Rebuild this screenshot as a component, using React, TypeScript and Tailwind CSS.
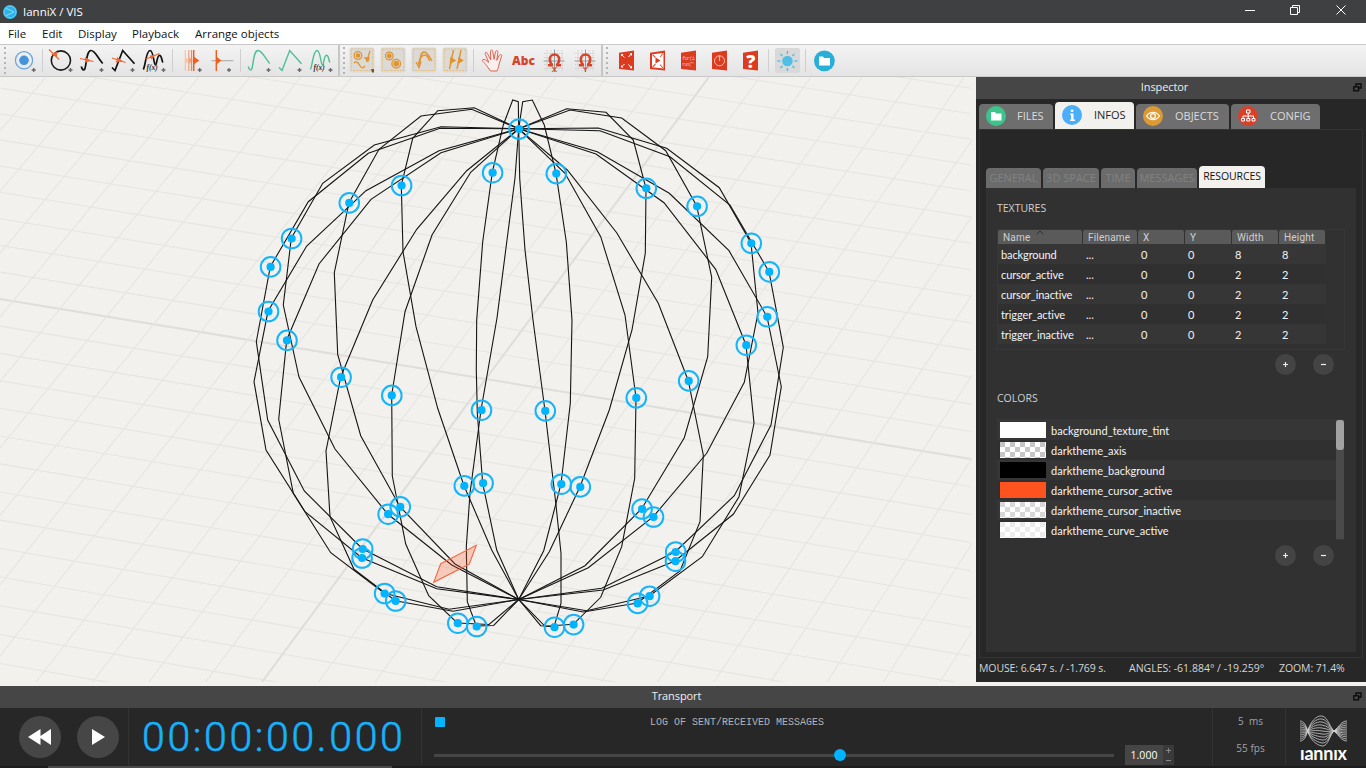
import type { ReactNode } from "react";

const UI = "font-['Open_Sans','Noto_Sans',sans-serif]";
const PANEL = "font-['Lato','Open_Sans',sans-serif]";

/* ---------- scene ---------- */

const TOP = "518.7,128.8";
const BOTTOM = "518.7,599.5";

const meridians: string[] = [
  "518.3,101.7 512.7,100 503.3,125 492.3,172.3 482.7,241.7 476.7,320 476.3,370 477.3,413 482.7,483.3 496.7,550",
  "515,178 507,240 497,318 481,410 470,493.3 466.3,546.7 467.3,601.7 476.3,626 493.7,625.5",
  "474.3,107.7 437.7,110.7 412.7,138.3 401.3,185.3 403,251.7 416,326.7 437.7,408.3 464,485.7 491.7,550",
  "471.7,109.3 421,116 379,149.3 349,202.7 334.3,272.7 337.7,354.3 360.7,435.7 400,506.7 455,564",
  "441,126.7 374.3,145 322.7,183.3 291.3,238.3 283.3,305 299,377 335,449 387.7,514 451.7,565",
  "440,128.3 368.3,153.3 308.3,201.7 270.3,266.7 256.3,341.7 267.7,420 304.3,491 362.3,548.7 436.7,586.7",
  "439,150.7 366,190.7 306.7,246 268,311.3 254,381.7 266,450 305,511.7 361.7,557.7 436.7,588.7",
  "441,152.7 371,199.3 319,264 286.7,340 278.7,419.3 293.3,493.3 330.7,552.7 384.3,593.3 449,609.3",
  "466.7,170.7 416.7,229.3 372.7,300 340.7,377 326,451 330,516.7 354,569.3 395.3,600.7 453,611.3",
  "470.7,172.3 432,235 405,311.7 391.7,395 392.3,476 405.7,544 428.7,595.7 457.3,623 489,624.5",
  "522.7,101.7 532.3,100 544.3,125 556,173.3 566.3,241.7 572,320 570.3,403.3 561,484 543.7,550.7",
  "519.7,178.3 525,250 533,320 545,410.7 556,505 561,553.3 561,603.3 554,626.7 540.7,625.7",
  "566.7,108.7 606,112.3 633.3,140 646,188.3 645.3,253.3 632,330 609.3,410 580,486.7 549.3,551.7",
  "570,110 621.7,118 665.7,150.7 696.7,206 711.7,277.3 707.7,356.7 684.3,437.7 641.7,508.7 585,565.7",
  "598.3,128 666.7,148.3 719.3,187.7 751,243 758,313 744.3,382.3 706.7,453.3 653.3,516.7 588.3,567.7",
  "600,130.7 670,156.7 730,205 769,271.7 783.3,347.3 771,425 734.3,495.7 675.3,551.7 601.7,588.3",
  "597.3,151.7 669.3,193.3 729,250.7 767,316.7 781.3,386.7 770,455 733.3,514.3 675,561 603.3,590",
  "596,154 664,202.7 715.7,269.3 746,345 754,423.3 739,496.7 702.3,556.7 649.3,596 586.7,610.7",
  "567.3,170 616.7,232.7 658.3,303.3 688.3,380.7 703.3,455 700,521.7 680,571 637.3,603 583.3,612",
  "565,173.3 600.7,236.7 625,315 636,397.7 634.7,478.3 621.7,546.7 600.7,597.3 573.3,624.3 545,626.3",
];

const triggers: [number, number][] = [
  [518.7, 128.8], [492.3, 172.5], [401.3, 185.3], [349, 202.7], [291.3, 238.3], [270.3, 266.7],
  [268.2, 311.3], [286.7, 340.2], [340.8, 377], [391.5, 395.2], [481.2, 410], [464, 485.7], [482.8, 483],
  [387.8, 514], [400, 506.7], [362.4, 548.8], [361.8, 557.8], [384.3, 593.3], [395.4, 600.8],
  [457.5, 623], [476.4, 626.3], [556, 173.4], [646, 188.1], [696.8, 206.1], [751, 243.1], [769, 271.7],
  [767, 316.6], [746, 345], [688.4, 380.7], [636, 397.7], [545, 410.7], [561, 484], [580, 486.7],
  [641.8, 508.8], [653.2, 516.8], [675.4, 551.8], [675.2, 561], [649.3, 596], [637.3, 603.2],
  [554.2, 627], [573.3, 624.4],
];

function Scene() {
  const rows: ReactNode[] = [];
  for (let k = -16; k <= 16; k++) {
    const left = 299 + 27 * k + 0.08 * k * k;
    const right = left + 160 + 0.6 * k;
    rows.push(
      <line key={k} x1={0} y1={left} x2={971} y2={right} stroke={k === 0 ? "#dfdeda" : "#e6e5e1"} strokeWidth={k === 0 ? 2.1 : 1.1} />
    );
  }
  const cols: ReactNode[] = [];
  for (let k = -16; k <= 14; k++) {
    cols.push(
      <line key={k} x1={709 + 51 * k} y1={77} x2={262 + 56.5 * k} y2={682} stroke={k === 0 ? "#dfdeda" : "#e6e5e1"} strokeWidth={k === 0 ? 2.1 : 1.1} />
    );
  }
  return (
    <svg width="972" height="605" viewBox="0 77 972 605" className="block shrink-0 bg-[#f2f1ed]">
      {rows}
      {cols}
      <g fill="none" stroke="#151515" strokeWidth="1.1">
        {meridians.map((m) => (
          <polyline key={m} points={`${TOP} ${m} ${BOTTOM}`} />
        ))}
      </g>
      <polygon points="476.3,545.3 469.3,564 433.7,582.3 440.7,563.7" fill="#ff5722" fillOpacity=".25" stroke="#f36a44" strokeWidth="1.1" />
      {triggers.map(([x, y]) => (
        <g key={`${x}-${y}`}>
          <circle cx={x + 0.3} cy={y + 0.2} r="9.8" fill="none" stroke="#16b4fa" strokeWidth="2" />
          <circle cx={x + 0.3} cy={y + 0.2} r="4.1" fill="#00b4ff" />
        </g>
      ))}
    </svg>
  );
}

/* ---------- toolbar ---------- */

function Slot({ children }: { children: ReactNode }) {
  return (
    <svg width="31" height="31" viewBox="0 1 31 31" className="block shrink-0">
      {children}
    </svg>
  );
}

const Plus = ({ x = 25.5 }: { x?: number }) => (
  <path d={`M${x - 2} 26h4M${x} 24v4`} stroke="#666" strokeWidth="1.3" />
);

const Fx = () => (
  <text x="8.5" y="26" fontSize="7.5" fontStyle="italic" fontWeight="bold" fill="#333" fontFamily="Liberation Serif, serif">
    f(x)
  </text>
);

function Divider({ className }: { className: string }) {
  return (
    <div className={`flex h-full shrink-0 justify-center py-1 ${className}`}>
      <div className="w-px bg-[#cfcfcf]" />
    </div>
  );
}

function Handle({ className }: { className: string }) {
  return (
    <div className={`flex shrink-0 flex-col items-center justify-center gap-[3px] ${className}`}>
      {[0, 1, 2, 3, 4, 5].map((i) => (
        <div key={i} className="h-[2px] w-[2px] bg-[#b4b4b4]" />
      ))}
    </div>
  );
}

const CURVE = "M5.3 22.5C6 25.5 7.5 26.5 8.5 25.5C10.5 23 10 6.500 15 6.500C19 6.500 20.500 12 26.700 19.500";
const ZIG = "M5 23.500L8 26.500L15.700 6.500L27.500 19.700";
const FUNC = "M5.300 25.500C7.500 22 8 6.500 12 6.500C15.800 6.500 15.500 21 17.500 21C19 21 18.800 11.300 21.500 11.300C24 11.300 23.500 17 25 18.500";

const Toggle = () => (
  <>
    <rect x="2.500" y="3.500" width="25" height="25" rx="2" fill="#dcdad6" />
    <rect x="4.300" y="5" width="21.500" height="21.500" fill="none" stroke="#e6bb78" strokeWidth=".9" strokeDasharray="2 1.200" />
  </>
);

const Magnet = ({ letter }: { letter: string }) => (
  <>
    <path d="M6 9.500h20M6 13.500h20M6 20.500h20M6 24.500h20M9 6v21M13 6v21M20 6v21M24 6v21" stroke="#c6c6c6" strokeWidth=".8" strokeDasharray="1.500 1" />
    <path d="M5.500 17h21M16.500 5.500V28" stroke="#8e8e8e" strokeWidth=".9" />
    <path d="M10 21.300h3.800v-1C12 18.500 11.800 17 11.800 15.200a4.700 4.700 0 0 1 9.400 0C21.200 17 21 18.500 19.200 20.300v1H23" fill="none" stroke="#d8432a" strokeWidth="2.600" />
    <text x="16.500" y="28" fontSize="8" fontWeight="bold" textAnchor="middle" fill="#d8432a" fontFamily="Liberation Sans, sans-serif">
      {letter}
    </text>
  </>
);

const RedPlate = () => <path d="M8 8.700L23 6.500V26.500L8 25Z" fill="#dc3b20" />;

function Toolbar() {
  return (
    <div className="flex h-[33px] shrink-0 items-center border-y border-[#c9c9c9] bg-gradient-to-b from-[#f3f3f3] to-[#e4e4e4]">
      <Handle className="w-[9px]" />
      <Slot>
        <circle cx="15" cy="16.300" r="8.600" fill="none" stroke="#67a5dc" strokeWidth="1.200" />
        <circle cx="15" cy="16.300" r="4.800" fill="#4394d8" />
        <Plus x={24.700} />
      </Slot>
      <Divider className="w-[5px]" />
      <Slot>
        <circle cx="15.900" cy="16.500" r="9.600" fill="none" stroke="#1a1a1a" strokeWidth="1.600" />
        <path d="M4 5.500L14 15.500M7.500 10.500l4-2v4z" stroke="#f2672e" fill="#f2672e" strokeWidth="1.200" />
        <Plus />
      </Slot>
      <Slot>
        <path d={CURVE} fill="none" stroke="#111" strokeWidth="1.700" />
        <path d="M4 14.500L17.500 17.500M9.500 14l4 2.500l-4 1.500z" stroke="#f2672e" fill="#f2672e" strokeWidth="1.200" />
        <Plus />
      </Slot>
      <Slot>
        <path d={ZIG} fill="none" stroke="#111" strokeWidth="1.700" />
        <path d="M5 14L18.500 18.500M10.500 14l4 3l-5 1z" stroke="#f2672e" fill="#f2672e" strokeWidth="1.200" />
        <Plus />
      </Slot>
      <Slot>
        <path d={FUNC} fill="none" stroke="#111" strokeWidth="1.700" />
        <path d="M8 15L21.500 9.500M12.500 12l4-.5l-3 3z" stroke="#f2672e" fill="#f2672e" strokeWidth="1.200" />
        <Fx />
        <Plus />
      </Slot>
      <Divider className="w-[7px]" />
      <Slot>
        <path d="M9.300 6v21" stroke="#f9c3a8" strokeWidth="1.200" />
        <path d="M9.300 13l4 3.500l-4 3.500z" fill="#f9c3a8" />
        <path d="M12.800 6v21" stroke="#f8a27c" strokeWidth="1.200" />
        <path d="M12.800 13l4 3.500l-4 3.500z" fill="#f8a27c" />
        <path d="M15.500 6v21" stroke="#f5865a" strokeWidth="1.200" />
        <path d="M17.700 6v21" stroke="#f25c1c" strokeWidth="1.500" />
        <path d="M17.700 12.500l5.500 4l-5.500 4z" fill="#f25c1c" />
        <Plus x={23.700} />
      </Slot>
      <Slot>
        <path d="M4.500 16.700H26.500" stroke="#aaa" strokeWidth="1.100" />
        <path d="M9.300 6v21" stroke="#f25c1c" strokeWidth="1.400" />
        <path d="M9.300 12.500l5 4l-5 4z" fill="#f25c1c" />
        <Plus x={22} />
      </Slot>
      <Divider className="w-[5px]" />
      <Slot>
        <path d={CURVE} fill="none" stroke="#4dbf94" strokeWidth="1.400" />
        <Plus />
      </Slot>
      <Slot>
        <path d={ZIG} fill="none" stroke="#4dbf94" strokeWidth="1.400" />
        <Plus />
      </Slot>
      <Slot>
        <path d={FUNC} fill="none" stroke="#4dbf94" strokeWidth="1.400" />
        <Fx />
        <Plus />
      </Slot>
      <div className="h-full w-1 shrink-0 border-r-2 border-[#c6c6c6]" />
      <Handle className="w-[7px]" />
      <Slot>
        <Toggle />
        <g fill="none" stroke="#e2932c" strokeWidth="1.300">
          <circle cx="11" cy="11.500" r="3.800" />
          <circle cx="11" cy="11.500" r="1.700" fill="#e2932c" />
          <path d="M7 19c2-2 4-1 5.500 2s3 4 5.500 1M23 7L19.500 18" />
          <path d="M18 14h4l-1 3z" fill="#e2932c" />
        </g>
        <path d="M24 25h3v3.500l-2 0z" fill="#6d5a2b" />
      </Slot>
      <Slot>
        <Toggle />
        <g fill="none" stroke="#e2932c" strokeWidth="1.300">
          <circle cx="11.300" cy="12" r="3.800" />
          <circle cx="11.300" cy="12" r="1.800" fill="#e2932c" />
          <circle cx="18.200" cy="19.700" r="4.300" />
          <circle cx="18.200" cy="19.700" r="2.200" fill="#e2932c" />
        </g>
      </Slot>
      <Slot>
        <Toggle />
        <g fill="none" stroke="#e2932c" strokeWidth="1.400">
          <path d="M7 18l3 5.500l2-6M10 23C11 17 11 8 15 8c4 0 5 5 8 9" />
          <path d="M9.500 20C11 13 13 11 16 11c2.500 0 3 2 4.500 6" />
        </g>
      </Slot>
      <Slot>
        <Toggle />
        <g stroke="#e2932c" strokeWidth="1.400" fill="#e2932c">
          <path d="M13.500 6L9.500 25M21 6L17 25" />
          <path d="M11 14l4 2.500l-4.500 2.500zM19 14l3.500 2.500l-4 2.500z" />
        </g>
      </Slot>
      <Divider className="w-[5px]" />
      <Slot>
        <g transform="translate(-136.200,-4) scale(.3333)">
          <path
            d="M452 93L440 76C432 66 425 62 429 59C433 56 440 62 447 67L437 44C434 36 440 34 443 41L453 60L452 35C452 28 458 28 459 35L463 58L467 36C469 29 475 31 474 38L471 61L478 47C482 41 488 44 485 50L478 72C477 82 474 86 472 93Z"
            fill="#fbeeee"
            stroke="#dd5a44"
            strokeWidth="2.800"
          />
        </g>
      </Slot>
      <div className="flex w-[31px] shrink-0 justify-center pl-[2px] font-['Open_Sans',sans-serif] text-[12px] font-extrabold leading-none text-[#d8432a]">
        Abc
      </div>
      <Slot>
        <Magnet letter="X" />
      </Slot>
      <Slot>
        <Magnet letter="Y" />
      </Slot>
      <div className="h-full w-[3px] shrink-0 border-r-2 border-[#c6c6c6]" />
      <Handle className="w-[8px]" />
      <Slot>
        <RedPlate />
        <path d="M10.500 10.500l3 3M20.500 9.500l-3 3.500M10.500 23l3-3M20.500 24l-3-3.500" stroke="#fff" strokeWidth="1" />
        <path d="M10 10l2.500 0l-2.500 2.500zM21 9l0 3l-2.500-2.500zM10 23.500v-2.500l2.500 2.500zM21 24.500v-3l-2.500 2.500z" fill="#fff" />
      </Slot>
      <Slot>
        <RedPlate />
        <path d="M10 10.300L21.500 9V24.500L10 23.300Z" fill="#fff" />
        <path d="M10.500 10.500l3 3M21 9.500l-3 3.500M10.500 23l3-3M21 24l-3-3.500" stroke="#e0583f" strokeWidth="1.100" />
        <path d="M13.500 13.500l5 3l-5 3z" fill="#dc3b20" />
      </Slot>
      <Slot>
        <RedPlate />
        <g fontSize="5.500" fill="#f7b9ac" fontFamily="Liberation Mono, monospace" textLength="13">
          <text x="9" y="15.500" textLength="13">for(i</text>
          <text x="9" y="21.500" textLength="12">run("</text>
        </g>
      </Slot>
      <Slot>
        <RedPlate />
        <circle cx="15.500" cy="16.800" r="5" fill="none" stroke="#f7b9ac" strokeWidth="1" />
        <path d="M15.500 11.500v5.500" stroke="#f7b9ac" strokeWidth="1.200" />
      </Slot>
      <Slot>
        <RedPlate />
        <text x="15.700" y="23.500" fontSize="18" fontWeight="800" textAnchor="middle" fill="#fff" fontFamily="Open Sans, sans-serif">
          ?
        </text>
      </Slot>
      <Divider className="w-[5px]" />
      <div className="w-px shrink-0" />
      <Slot>
        <rect x="3" y="4" width="25" height="25" rx="2" fill="#d9d9d9" />
        <circle cx="15.400" cy="17" r="5.300" fill="#4fbfe6" />
        <g stroke="#4fbfe6" strokeWidth="1.400">
          {[0, 45, 90, 135, 180, 225, 270, 315].map((a) => (
            <path key={a} d="M15.400 7v3" transform={`rotate(${a} 15.400 17)`} />
          ))}
        </g>
      </Slot>
      <Divider className="w-[5px]" />
      <Slot>
        <circle cx="16.400" cy="16.800" r="10.400" fill="#27afd8" />
        <path d="M11 12.500h4l1 1.500h6v7.500h-11z" fill="#fff" />
      </Slot>
    </div>
  );
}

/* ---------- inspector ---------- */

const FloatIcon = () => (
  <svg width="9" height="9" viewBox="0 0 9 9" className="block shrink-0">
    <path d="M3 3V1h5v4H6" fill="none" stroke="#0c0c0c" strokeWidth="1.400" />
    <rect x=".8" y="3.800" width="4.800" height="4" fill="none" stroke="#0c0c0c" strokeWidth="1.400" />
  </svg>
);

function DockTitle({ title }: { title: string }) {
  return (
    <div className="flex h-[22px] shrink-0 items-center bg-[#464646] pb-px pr-[4px]">
      <div className={`flex-1 text-center text-[11px] leading-[12px] tracking-[-.1px] text-[#efefef] ${UI}`}>
        <div className="-mt-px">{title}</div>
      </div>
      <FloatIcon />
    </div>
  );
}

const mainTabs = [
  {
    label: "FILES",
    box: "h-[25px] w-[74px] bg-[#6e6e6e] text-[#dcdcdc]",
    text: "w-[42px]",
    color: "#3cc48c",
    icon: <path d="M5 6h4l1 1.500h5.500v7h-10.500z" fill="#fff" />,
  },
  {
    label: "INFOS",
    box: "h-[27px] w-[79px] bg-[#f2f1ed] text-[#1e1e1e]",
    text: "w-[46px]",
    color: "#4aaef8",
    icon: <path d="M8.500 8.500h3v6h1.500v1.500h-5v-1.500h1v-4.500h-1zM8.800 4.500h2.500v2.500h-2.500z" fill="#fff" />,
  },
  {
    label: "OBJECTS",
    box: "h-[25px] w-[93px] bg-[#6e6e6e] text-[#dcdcdc]",
    text: "w-[60px]",
    color: "#dd9a33",
    icon: (
      <g fill="none" stroke="#fff" strokeWidth="1.200">
        <path d="M3.500 10c3.500-5 9.500-5 13 0c-3.500 5-9.500 5-13 0z" />
        <circle cx="10" cy="10" r="2.400" />
      </g>
    ),
  },
  {
    label: "CONFIG",
    box: "h-[25px] w-[89px] bg-[#6e6e6e] text-[#dcdcdc]",
    text: "w-[56px]",
    color: "#d8402a",
    icon: (
      <g fill="none" stroke="#fff" strokeWidth="1">
        <path d="M8.500 4h3.500v3h-3.500zM10.200 7v5M5 12V10h10.500v2M3.500 12.500h3v2.500h-3zM8.800 12.500h3v2.500h-3zM14 12.500h3v2.500h-3z" />
      </g>
    ),
  },
];

const subTabs = [
  { label: "GENERAL", cls: "w-[55px]" },
  { label: "3D SPACE", cls: "w-[56px]" },
  { label: "TIME", cls: "w-[34px]" },
  { label: "MESSAGES", cls: "w-[60px]" },
];

const textures = [
  ["background", "8"],
  ["cursor_active", "2"],
  ["cursor_inactive", "2"],
  ["trigger_active", "2"],
  ["trigger_inactive", "2"],
];

const colors = [
  ["background_texture_tint", "bg-white"],
  ["darktheme_axis", "bg-[conic-gradient(#fff_25%,#c6c6c6_0_50%,#fff_0_75%,#c6c6c6_0)] bg-[length:10px_10px]"],
  ["darktheme_background", "bg-black"],
  ["darktheme_cursor_active", "bg-[#ff531f]"],
  ["darktheme_cursor_inactive", "bg-[conic-gradient(#fff_25%,#d8d8d8_0_50%,#fff_0_75%,#d8d8d8_0)] bg-[length:10px_10px]"],
  ["darktheme_curve_active", "bg-[conic-gradient(#fff_25%,#ebebeb_0_50%,#fff_0_75%,#ebebeb_0)] bg-[length:10px_10px]"],
];

const headers = [
  ["Name", "w-[84px] mr-[1px]"],
  ["Filename", "w-[54px] mr-[1px]"],
  ["X", "w-[46px] mr-[1px]"],
  ["Y", "w-[46px] mr-[1px]"],
  ["Width", "w-[46px] mr-[1px]"],
  ["Height", "w-[46px]"],
];

function AddRemove() {
  return (
    <div className="flex h-[21px] justify-end gap-[17px] pr-[22px]">
      {["M3 5.500h5M5.500 3v5", "M3 5.500h5"].map((d) => (
        <div key={d} className="flex h-[21px] w-[21px] items-center justify-center rounded-full bg-[#444]">
          <svg width="11" height="11" viewBox="0 0 11 11">
            <path d={d} stroke="#eee" strokeWidth="1.200" />
          </svg>
        </div>
      ))}
    </div>
  );
}

function Inspector() {
  return (
    <div className={`flex h-[605px] w-[390px] shrink-0 flex-col bg-[#272727] ${PANEL}`}>
      <DockTitle title="Inspector" />
      <div className="flex h-[30px] shrink-0 items-end gap-[2px] pl-[3px]">
        {mainTabs.map((t) => (
          <div key={t.label} className={`flex items-center justify-between rounded-t-[4px] pb-[2px] pl-[7px] ${t.box}`}>
            <svg width="20" height="20" viewBox="0 0 20 20" className="block shrink-0">
              <circle cx="10" cy="10" r="10" fill={t.color} />
              {t.icon}
            </svg>
            <span className={`shrink-0 pl-[6px] text-[11px] leading-none ${UI} ${t.text}`}>{t.label}</span>
          </div>
        ))}
      </div>
      <div className="mx-[3px] h-[529px] shrink-0 border border-[#333] px-[6px] pt-[36px]">
        <div className="flex h-[22px] items-end gap-[2px]">
          {subTabs.map((t) => (
            <div key={t.label} className={`flex h-[20px] shrink-0 items-center justify-center rounded-t-[4px] bg-[#6b6b6b] pb-px text-[11px] leading-none text-[#828282] ${UI} ${t.cls}`}>
              {t.label}
            </div>
          ))}
          <div className={`flex h-[22px] w-[66px] shrink-0 items-center justify-center rounded-t-[4px] bg-[#f2f1ed] pb-px text-[10.5px] leading-none tracking-[-.1px] text-[#111] ${UI}`}>
            RESOURCES
          </div>
        </div>
        <div className="h-[464px] w-[370px] bg-[#313131] pl-[11px] pt-[14px]">
          <div className={`h-[27px] text-[10.500px] leading-[12px] text-[#d0d0d0] ${UI}`}>TEXTURES</div>
          <div className="h-[121px] w-[348px] border border-[#373737]">
            <div className="flex h-[14px]">
              {headers.map(([h, w]) => (
                <div key={h} className={`relative shrink-0 overflow-hidden rounded-t-[2px] bg-[#5a5a5a] pl-[5px] font-['Roboto',sans-serif] text-[10px] leading-[15px] tracking-[.2px] text-[#d0d0d0] ${w}`}>
                  {h}
                  {h === "Name" && (
                    <svg width="8" height="5" viewBox="0 0 8 5" className="absolute left-[38px] top-0">
                      <path d="M.5 4.500L4 1l3.500 3.500" fill="none" stroke="#2e2e2e" />
                    </svg>
                  )}
                </div>
              ))}
            </div>
            {textures.map(([name, size], i) => (
              <div key={name} className={`flex h-[20px] w-[328px] items-center pl-[3px] text-[11px] leading-none text-[#f4f4f4] ${i % 2 ? "bg-[#303030]" : "bg-[#363636]"}`}>
                <span className="w-[85px] tracking-[-.1px]">{name}</span>
                <span className="w-[55px]">...</span>
                <span className="w-[47px]">0</span>
                <span className="w-[47px]">0</span>
                <span className="w-[47px]">{size}</span>
                <span>{size}</span>
              </div>
            ))}
          </div>
          <div className="h-[4px]" />
          <AddRemove />
          <div className="h-[17px]" />
          <div className={`h-[27px] text-[10.500px] leading-[12px] text-[#d0d0d0] ${UI}`}>COLORS</div>
          <div className="flex h-[121px] w-[348px] border-y border-[#373737]">
            <div className="w-[339px]">
              {colors.map(([name, bg], i) => (
                <div key={name} className={`flex h-[20px] items-center gap-[5px] pl-[3px] text-[11px] leading-none text-[#f4f4f4] ${i % 2 ? "bg-[#303030]" : "bg-[#363636]"}`}>
                  <div className={`h-[16px] w-[46px] shrink-0 ${bg}`} />
                  {name}
                </div>
              ))}
            </div>
            <div className="h-full w-[8px] bg-[#4a4a4a]">
              <div className="h-[30px] rounded-[3px] bg-[#a2a2a2]" />
            </div>
          </div>
          <div className="h-[5px]" />
          <AddRemove />
        </div>
      </div>
      <div className={`flex h-[20px] items-center whitespace-nowrap pl-[3px] text-[10.500px] leading-none tracking-[-.1px] text-[#d6d6d6] ${UI}`}>
        <span className="w-[150px]">MOUSE: 6.647 s. / -1.769 s.</span>
        <span className="w-[150px] tracking-normal">ANGLES: -61.884° / -19.259°</span>
        <span>ZOOM: 71.4%</span>
      </div>
    </div>
  );
}

/* ---------- transport ---------- */

function Logo() {
  const waves: ReactNode[] = [];
  for (let i = 0; i < 11; i++) {
    const y = 6 + i * 2;
    const m = 16 - y;
    waves.push(
      <path
        key={i}
        d={`M0 ${y}C4 ${y} 6 ${16 - m * 0.6} 8 ${16 + m * 0.1}S16 ${16 + m * 1.5 - 1} 22 ${16 + m * 1.5}S30 ${16 + m * 0.3} 34.500 ${16 - m * 0.05}S41 ${y} 47 ${y}`}
      />
    );
  }
  return (
    <svg width="48" height="32" viewBox="0 0 48 32" className="block">
      <g fill="none" stroke="#cfcfcf" strokeWidth=".8">
        {waves}
      </g>
    </svg>
  );
}

function Transport() {
  return (
    <div className="flex h-[82px] shrink-0 flex-col bg-[#272727]">
      <DockTitle title="Transport" />
      <div className="flex h-[58px] shrink-0">
        <div className="flex w-[129px] shrink-0 items-center gap-[16px] border-r border-[#333] pl-[19px]">
          <div className="flex h-[42px] w-[42px] items-center justify-center rounded-full bg-[#464646]">
            <svg width="23" height="16" viewBox="0 0 23 16" className="mr-px">
              <path d="M12.500 0v16L0 8zM23 0v16L11 8z" fill="#fff" />
            </svg>
          </div>
          <div className="flex h-[42px] w-[42px] items-center justify-center rounded-full bg-[#464646]">
            <svg width="13" height="16" viewBox="0 0 13 16">
              <path d="M0 0v16l13-8z" fill="#fff" />
            </svg>
          </div>
        </div>
        <div className="flex w-[293px] shrink-0 items-center whitespace-nowrap border-r border-[#333] pl-[13px] font-['Roboto',sans-serif] text-[41px] font-light leading-none tracking-[2.650px] text-[#16b2fb] [-webkit-text-stroke:0.600px_#16b2fb]">
          00:00:00.000
        </div>
        <div className="flex w-[791px] shrink-0 flex-col border-r border-[#333] pl-[12px]">
          <div className="flex h-[28px] shrink-0 items-center">
            <div className="ml-px h-[10px] w-[10px] rounded-[1px] bg-[#00b4ff]" />
            <div className="flex-1 pl-[3px] pr-[186px] pt-px text-center font-['Liberation_Mono',monospace] text-[10px] leading-none text-[#b4b4b4]">
              LOG OF SENT/RECEIVED MESSAGES
            </div>
          </div>
          <div className="mt-[9px] flex h-[20px] shrink-0 items-center">
            <div className="flex h-[12px] w-[680px] items-center">
              <div className="h-[3px] w-[400px] bg-[#464646]" />
              <div className="h-[12px] w-[12px] rounded-full bg-[#00b4ff]" />
              <div className="h-[3px] w-[268px] bg-[#464646]" />
            </div>
            <div className={`ml-[11px] flex h-[20px] w-[38px] items-center justify-center bg-[#464646] text-[10.500px] leading-none text-white ${UI}`}>1.000</div>
            <div className="flex h-[20px] w-[11px] flex-col items-center justify-around bg-[#3a3a3a] text-[#888]">
              <svg width="7" height="7" viewBox="0 0 7 7">
                <path d="M1 3.500h5M3.500 1v5" stroke="currentColor" />
              </svg>
              <svg width="7" height="7" viewBox="0 0 7 7">
                <path d="M1 3.500h5" stroke="currentColor" />
              </svg>
            </div>
          </div>
        </div>
        <div className={`flex w-[73px] shrink-0 flex-col items-center border-r border-[#333] pt-[8px] pr-[1px] text-[10px] leading-none text-[#a4a4a4] ${UI}`}>
          <div className="h-[27px] whitespace-pre pl-[4px]">5  ms</div>
          <div className="pl-[4px]">55 fps</div>
        </div>
        <div className="flex flex-1 flex-col items-start pl-[14px] pt-[7px]">
          <Logo />
          <div className="-mt-[3px] font-['Lato',sans-serif] text-[18px] font-bold leading-[18px] tracking-[-.2px] text-white">ıannıx</div>
        </div>
      </div>
      <div className="flex h-[2px] bg-[#1d1d1d] pl-[48px]">
        <div className="h-full w-[344px] bg-[#4a4a4a]" />
      </div>
    </div>
  );
}

/* ---------- window ---------- */

export default function App() {
  return (
    <div className="flex h-[768px] w-[1366px] flex-col overflow-hidden bg-[#f2f1ed]">
      <div className={`flex h-[23px] shrink-0 items-center bg-[#3e4042] text-white ${UI}`}>
        <svg width="14" height="14" viewBox="0 0 14 14" className="ml-[3px] block">
          <circle cx="7" cy="7" r="7" fill="#2bb4ea" />
          <circle cx="7" cy="7" r="6" fill="none" stroke="#7fd3f5" strokeWidth=".8" />
          <path d="M3 3.500c3 1 5 2 8 3.500c-3 1.500-5 2.500-8 3.500" fill="none" stroke="#8fdaf8" strokeWidth="1" />
        </svg>
        <span className="ml-[6px] flex-1 text-[11.500px] leading-none">IanniX / VIS</span>
        <svg width="116" height="23" viewBox="1242 0 116 23" className="mr-[8px] block" fill="none" stroke="#fff" strokeWidth="1">
          <path d="M1245 10.500h10M1336.500 5.500l9 9M1345.500 5.500l-9 9" />
          <path d="M1290.500 7.500h7v7h-7zM1292.500 7.500v-2h7v7h-2" />
        </svg>
      </div>
      <div className={`flex h-[21px] shrink-0 items-center bg-white pl-[8px] text-[11.500px] leading-none text-[#111] ${UI}`}>
        <span className="w-[34px]">File</span>
        <span className="w-[36px]">Edit</span>
        <span className="w-[54px]">Display</span>
        <span className="w-[63px]">Playback</span>
        <span>Arrange objects</span>
      </div>
      <Toolbar />
      <div className="flex h-[605px] shrink-0">
        <Scene />
        <div className="w-[4px] shrink-0" />
        <Inspector />
      </div>
      <div className="h-[4px] shrink-0" />
      <Transport />
    </div>
  );
}
